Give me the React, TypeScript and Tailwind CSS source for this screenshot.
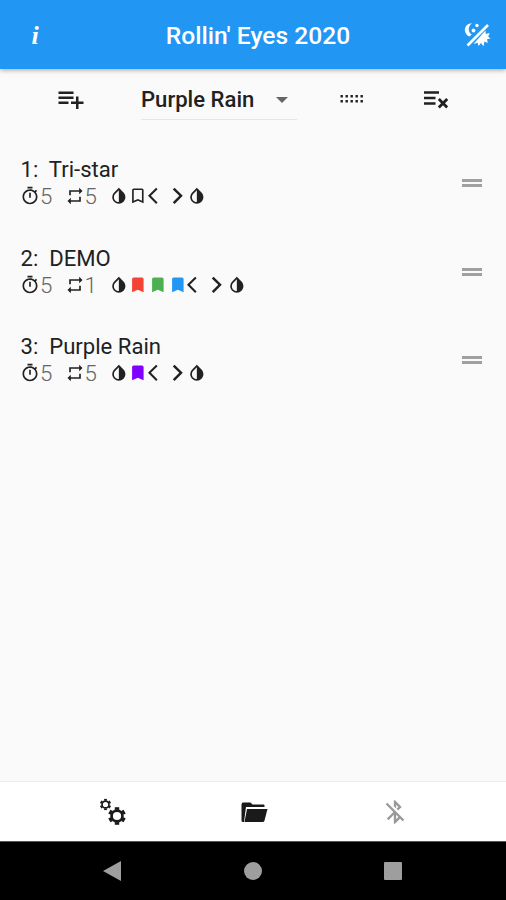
type IconProps = { d: string; className?: string }

const Icon = ({ d, className = '' }: IconProps) => (
  <svg viewBox="0 0 24 24" fill="currentColor" className={`shrink-0 ${className}`}>
    <path d={d} />
  </svg>
)

const TIMER =
  'M15 1H9v2h6V1zm-4 13h2V8h-2v6zm8.03-6.61l1.42-1.42c-.43-.51-.9-.99-1.41-1.41l-1.42 1.42C16.07 4.74 14.12 4 12 4c-4.97 0-9 4.03-9 9s4.02 9 9 9 9-4.03 9-9c0-2.12-.74-4.07-1.97-5.61zM12 20c-3.87 0-7-3.13-7-7s3.13-7 7-7 7 3.13 7 7-3.13 7-7 7z'
const REPEAT = 'M7 7h10v3l4-4-4-4v3H5v6h2V7zm10 10H7v-3l-4 4 4 4v-3h12v-6h-2v4z'
const INVERT =
  'M17.66 7.93L12 2.27 6.34 7.93c-3.12 3.12-3.12 8.19 0 11.31C7.9 20.8 9.95 21.58 12 21.58s4.1-.78 5.66-2.34c3.12-3.12 3.12-8.19 0-11.31zM12 19.59c-1.6 0-3.11-.62-4.24-1.76C6.62 16.69 6 15.19 6 13.59s.62-3.11 1.76-4.24L12 5.1v14.49z'
const BOOKMARK = 'M17 3H7c-1.1 0-2 .9-2 2v16l7-3 7 3V5c0-1.1-.9-2-2-2z'
const BOOKMARK_OUTLINE = 'M17 3H7c-1.1 0-2 .9-2 2v16l7-3 7 3V5c0-1.1-.9-2-2-2zm0 15l-5-2.18L7 18V5h10v13z'
const BACK = 'M11.67 3.87L9.9 2.1 0 12l9.9 9.9 1.77-1.77L3.54 12z'
const FORWARD = 'M5.88 4.12L13.76 12l-7.88 7.88L8 22l10-10L8 2z'
const PLAYLIST_ADD = 'M14 10H2v2h12v-2zm0-4H2v2h12V6zm4 8v-4h-2v4h-4v2h4v4h2v-4h4v-2h-4zM2 16h8v-2H2v2z'
const BLUETOOTH_OFF =
  'M13 5.83l1.88 1.88-1.6 1.6 1.41 1.41 3.02-3.02L12 2h-1v5.03l2 2v-3.2zM5.41 4L4 5.41 10.59 12 5 17.59 6.41 19 11 14.41V22h1l4.29-4.29 2.3 2.29L20 18.59 5.41 4zM13 18.17v-3.76l1.88 1.88L13 18.17z'

const items = [
  { name: 'Tri-star', time: 5, repeat: 5, colors: [''] },
  { name: 'DEMO', time: 5, repeat: 1, colors: ['text-[#f44336]', 'text-[#4caf50]', 'text-[#2196f3]'] },
  { name: 'Purple Rain', time: 5, repeat: 5, colors: ['text-[#7f00ff]'] },
]

function Gear({ x, y, r, w }: { x: number; y: number; r: number; w: number }) {
  return (
    <g transform={`translate(${x} ${y})`} stroke="currentColor" fill="none">
      <circle r={r * 0.62} strokeWidth={w} />
      {[30, 90, 150, 210, 270, 330].map((a) => (
        <path key={a} d={`M${r * 0.7} 0H${r}`} strokeWidth={r * 0.5} transform={`rotate(${a})`} />
      ))}
    </g>
  )
}

function Header() {
  return (
    <header className="z-10 flex h-[69px] shrink-0 items-center bg-[#2196f3] pt-[3px] text-white shadow-[0_1px_5px_rgba(0,0,0,0.35)]">
      <div className="w-[70px] text-center font-['Liberation_Serif',serif] text-[26px] leading-none font-bold italic">i</div>
      <h1 className="flex-1 text-center text-[24.6px] font-medium">Rollin' Eyes 2020</h1>
      <div className="w-[60px] pl-[17px]">
        <svg viewBox="0 0 28 28" className="mb-0.5 size-7" fill="currentColor">
          <path d="M9 2.2C4 2.6 1.2 6 2 10c.5 2.8 2.2 4.8 4.500 5.500l2.300-2.300C4.800 11.500 4.700 5.500 9 2.200z" />
          <circle cx="14" cy="4.5" r="1.7" />
          <circle cx="10.5" cy="9.5" r="1.9" />
          <path d="M4.500 24.500L25 4" stroke="currentColor" strokeWidth="2.6" />
          <path d="M22.500 9.500l.2 3.500 4-1-1.500 3.500 2.300 2-3.500.700.800 3.800-3.300-1.500-1 4.700-2.500-3.200-2.500 3-.800-3.200-4.200 1.200z" />
        </svg>
      </div>
    </header>
  )
}

function Toolbar() {
  return (
    <div className="flex h-[61px] shrink-0 items-center text-[#212121]">
      <div className="flex w-[141px] justify-center pb-0.5">
        <Icon d={PLAYLIST_ADD} className="size-[30px]" />
      </div>
      <div className="flex h-[40px] w-[156px] items-center justify-between border-b border-[#e6e6e6] pt-0.5 pr-[9px] text-[22.1px] font-medium">
        Purple Rain
        <svg viewBox="0 0 12 6" className="h-1.5 w-3 fill-[#666]">
          <path d="M0 0h12L6 6z" />
        </svg>
      </div>
      <div className="flex w-[110px] justify-center pb-px">
        <svg viewBox="0 0 24 8" className="h-2 w-6" fill="currentColor">
          {[0.5, 5.5, 10.5, 15.5, 20.5].map((x) => (
            <path key={x} d={`M${x} 0h2.400v2.400h-2.400zM${x} 5h2.400v2.400h-2.400z`} />
          ))}
        </svg>
      </div>
      <div className="flex w-[58px] justify-center">
        <svg viewBox="0 0 24 18" className="h-[18px] w-6" fill="none" stroke="currentColor">
          <path d="M0 1.500h15M0 7h11.500M0 12.500h11.500" strokeWidth="2.4" />
          <path d="M14.800 8l8.400 8.400M23.200 8l-8.400 8.400" strokeWidth="2.8" />
        </svg>
      </div>
    </div>
  )
}

export default function App() {
  return (
    <div className="flex h-[900px] w-[506px] flex-col overflow-hidden bg-[#fafafa] font-[Roboto,sans-serif]">
      <Header />
      <Toolbar />

      <main className="flex-1 pt-2 text-[#212121]">
        {items.map((item, i) => (
          <div key={item.name} className="flex h-[88.5px] items-center justify-between pr-6 pl-5">
            <div>
              <div className="pl-[0.5px] text-[22.1px] leading-[26px] whitespace-pre">{`${i + 1}:  ${item.name}`}</div>
              <div className="flex h-[26px] items-center pt-0.5">
                <Icon d={TIMER} className="size-5" />
                <span className="w-[24.5px] text-[22.3px] leading-[26px] font-light text-[#666]">{item.time}</span>
                <Icon d={REPEAT} className="size-5" />
                <span className="w-6 text-[22.3px] leading-[26px] font-light text-[#666]">{item.repeat}</span>
                <Icon d={INVERT} className="size-[19.7px]" />
                {item.colors.map((c) => (
                  <Icon key={c} d={c ? BOOKMARK : BOOKMARK_OUTLINE} className={`size-[19.7px] ${c}`} />
                ))}
                <Icon d={BACK} className="size-[19.7px]" />
                <Icon d={FORWARD} className="size-[19.7px]" />
                <Icon d={INVERT} className="size-[19.7px]" />
              </div>
            </div>
            <div className="flex w-5 flex-col gap-0.5 pt-0.5">
              <div className="h-[3px] bg-[#a0a0a0]" />
              <div className="h-[3px] bg-[#a0a0a0]" />
            </div>
          </div>
        ))}
      </main>

      <nav className="grid h-[60px] shrink-0 grid-cols-[183px_141px_141px] border-t border-[#ececec] bg-white text-[#1a1a1a]">
        <div className="flex items-center justify-end pt-px pr-14">
          <svg viewBox="0 0 28 28" className="size-7">
            <Gear x={6.5} y={6.5} r={5.6} w={1.7} />
            <Gear x={18} y={18} r={8.8} w={2.7} />
          </svg>
        </div>
        <div className="flex items-center justify-center pt-px pl-px">
          <svg viewBox="0 0 27 21" className="h-[21px] w-[27px]" fill="currentColor">
            <path d="M1.500 0.500h8l2 2h11q1 0 1 1V5H5L3 20H2q-1.500 0-1.500-1.500V2z" />
            <path d="M6 7h20.500l-3 11.500q-.4 1.500-2 1.500H3.500z" />
          </svg>
        </div>
        <div className="flex items-center justify-center pt-px text-[#999]">
          <Icon d={BLUETOOTH_OFF} className="size-7" />
        </div>
      </nav>

      <footer className="grid h-[59px] shrink-0 grid-cols-[183px_140px_140px] items-center border-t border-[#555] bg-black text-[#9e9e9e]">
        <svg viewBox="0 0 18 20" className="ml-[103px] h-5 w-[18px]" fill="currentColor">
          <path d="M18 0v20L0 10z" />
        </svg>
        <div className="size-[18px] justify-self-center rounded-full bg-[#9e9e9e]" />
        <div className="size-[18px] justify-self-center rounded-[1px] bg-[#9e9e9e]" />
      </footer>
    </div>
  )
}
